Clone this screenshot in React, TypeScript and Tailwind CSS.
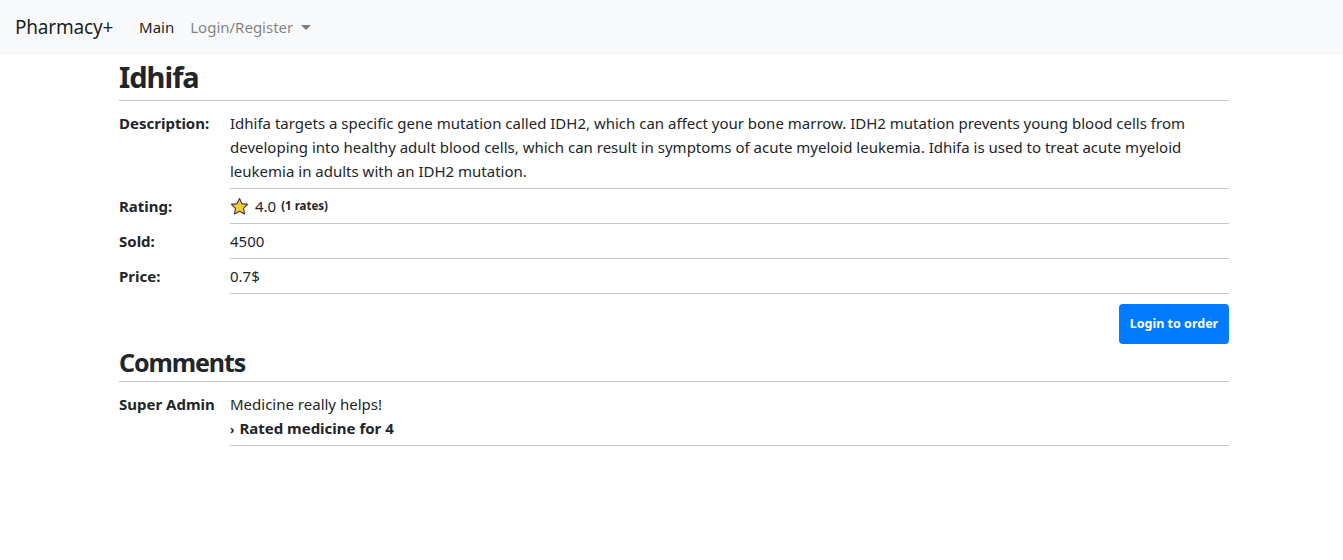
import React from "react";

function Star() {
  return (
    <svg width="19" height="19" viewBox="0 0 24 24" className="inline-block">
      <path
        d="M12 1.8l3.1 6.6 7.2.9-5.3 5 1.4 7.1L12 17.9l-6.4 3.5 1.4-7.1-5.3-5 7.2-.9z"
        fill="#FFC83D"
        stroke="#3a3a3a"
        strokeWidth="1.4"
        strokeLinejoin="round"
      />
    </svg>
  );
}

export default function App() {
  const font = { fontFamily: '"Noto Sans", "Open Sans", sans-serif' };
  return (
    <div className="min-h-[560px] bg-white text-[#212529]" style={font}>
      <nav className="h-[55px] bg-[#f8f9fa] flex items-center px-[15px]">
        <span className="text-[19px] tracking-[-0.2px] leading-[30px] text-[rgba(0,0,0,0.9)] mr-[18px] pb-[2px]">Pharmacy+</span>
        <span className="px-[8px] text-[15px] text-[rgba(0,0,0,0.9)]">Main</span>
        <span className="px-[8px] text-[15px] text-[rgba(0,0,0,0.5)] flex items-center">
          Login/Register
          <span className="ml-[8px] inline-block w-0 h-0 border-l-[5px] border-r-[5px] border-t-[5px] border-l-transparent border-r-transparent border-t-[rgba(0,0,0,0.5)]"></span>
        </span>
      </nav>
      <div className="ml-[119px] w-[1110px]">
        <h1 className="text-[29px] tracking-[-1px] font-bold leading-[44px] pb-[1px]">Idhifa</h1>
        <div className="border-t border-[#c6c6c6] mb-[5px]"></div>
        <div className="grid grid-cols-[111px_1fr] text-[15px] leading-[24px]">
          <div className="font-bold py-[5px]">Description:</div>
          <div className="py-[5px] border-b border-[#c6c6c6]">
            Idhifa targets a specific gene mutation called IDH2, which can affect your bone marrow. IDH2 mutation prevents young blood cells from developing into healthy adult blood cells, which can result in symptoms of acute myeloid leukemia. Idhifa is used to treat acute myeloid leukemia in adults with an IDH2 mutation.
          </div>
          <div className="font-bold py-[5px]">Rating:</div>
          <div className="py-[5px] border-b border-[#c6c6c6] flex items-center">
            <Star />
            <span className="ml-[6px]">4.0</span>
            <span className="ml-[5px] text-[11.5px] font-bold">(1 rates)</span>
          </div>
          <div className="font-bold py-[5px]">Sold:</div>
          <div className="py-[5px] border-b border-[#c6c6c6]">4500</div>
          <div className="font-bold py-[5px]">Price:</div>
          <div className="py-[5px] border-b border-[#c6c6c6]">0.7$</div>
        </div>
        <div className="flex justify-end mt-[10px]">
          <button className="h-[40px] w-[110px] bg-[#007bff] text-white text-[12.5px] font-bold rounded-[4px]">Login to order</button>
        </div>
        <h2 className="text-[25px] tracking-[-1.1px] font-bold leading-[36px] pb-[1px]">Comments</h2>
        <div className="border-t border-[#c6c6c6] mb-[5px]"></div>
        <div className="grid grid-cols-[111px_1fr] text-[15px] leading-[24px]">
          <div className="font-bold py-[5px]">Super Admin</div>
          <div className="pt-[5px] pb-[3px] border-b border-[#c6c6c6]">
            <div>Medicine really helps!</div>
            <div className="font-bold"><span className="text-[12px] mr-[5px]">›</span>Rated medicine for 4</div>
          </div>
        </div>
      </div>
    </div>
  );
}
